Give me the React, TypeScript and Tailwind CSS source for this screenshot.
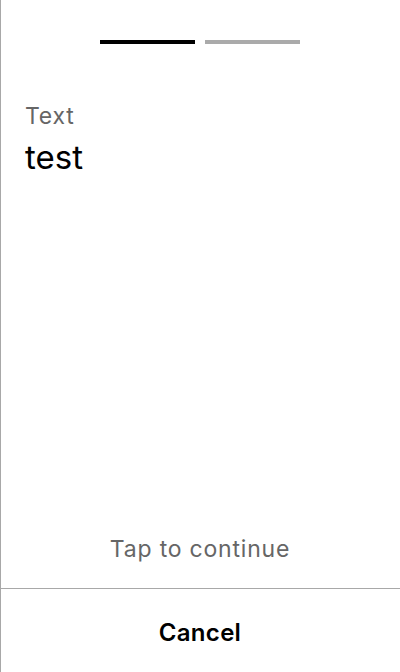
export default function App() {
  return (
    <div
      className="h-[672px] w-[400px] bg-white border-l border-[#a8a8a8] flex flex-col"
      style={{ fontFamily: "Inter, 'Noto Sans', sans-serif" }}
    >
      <div className="flex flex-col flex-1">
        <div className="flex justify-center gap-[10px] pt-[40px] -ml-px">
          <div className="h-[4px] w-[95px] bg-black" />
          <div className="h-[4px] w-[95px] bg-[#aaaaaa]" />
        </div>
        <div className="px-[24px] pt-[58px]">
          <div className="text-[23px] leading-[28px] tracking-[0.8px] text-[#666666]">Text</div>
          <div className="text-[33px] leading-[40px] text-black mt-[7px]">test</div>
        </div>
        <div className="flex-1" />
        <div className="text-center text-[23px] leading-[28px] tracking-[0.8px] text-[#666666] pb-[25px] -ml-px">
          Tap to continue
        </div>
      </div>
      <div className="border-t border-[#a8a8a8] h-[84px] pt-[4px] flex items-center justify-center -ml-px">
        <span className="text-[24px] leading-[29px] tracking-[0.3px] font-semibold text-black">Cancel</span>
      </div>
    </div>
  );
}
